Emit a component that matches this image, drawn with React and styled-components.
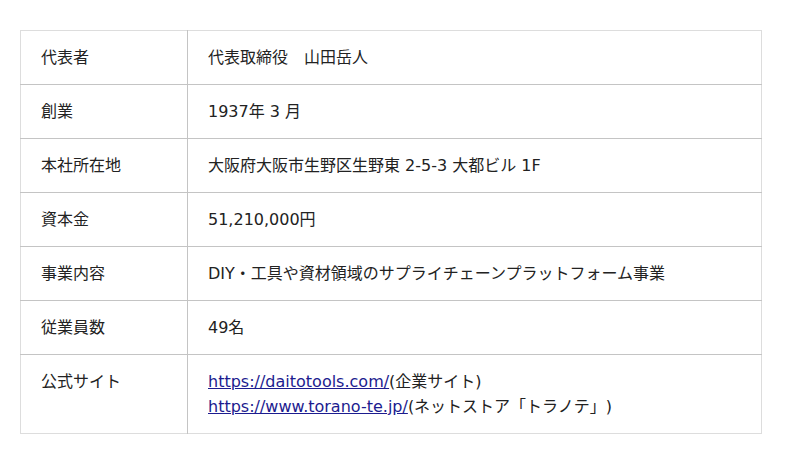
import React from "react";
import styled, { createGlobalStyle } from "styled-components";

const GlobalStyle = createGlobalStyle`
  html, body {
    margin: 0;
    padding: 0;
    background: #fff;
  }
  body {
    font-family: "DejaVu Sans", "Noto Sans CJK JP", sans-serif;
    color: #222;
    text-spacing-trim: space-all;
  }
`;

const Page = styled.div`
  padding: 30px 20px;
`;

const Table = styled.table`
  width: 742px;
  border-collapse: collapse;
  border: 1px solid #ddd;
  font-size: 16px;
  line-height: 25px;
`;

const Row = styled.tr`
  border-bottom: 1px solid #c4c4c4;
  &:last-child {
    border-bottom: 1px solid #ddd;
  }
`;

const Head = styled.th`
  width: 126px;
  padding: 14px 20px;
  text-align: left;
  vertical-align: top;
  font-weight: normal;
  border-right: 1px solid #c4c4c4;
`;

const Cell = styled.td`
  padding: 14px 20px;
  vertical-align: top;
`;

const Link = styled.a`
  color: #1c1c8f;
  text-decoration: underline;
`;

const rows = [
  ["代表者", "代表取締役　山田岳人"],
  ["創業", "1937年 3 月"],
  ["本社所在地", "大阪府大阪市生野区生野東 2-5-3 大都ビル 1F"],
  ["資本金", "51,210,000円"],
  ["事業内容", "DIY・工具や資材領域のサプライチェーンプラットフォーム事業"],
  ["従業員数", "49名"],
];

const App = () => {
  return (
    <Page>
      <GlobalStyle />
      <Table>
        <tbody>
          {rows.map(([k, v]) => (
            <Row key={k}>
              <Head>{k}</Head>
              <Cell>{v}</Cell>
            </Row>
          ))}
          <Row>
            <Head>公式サイト</Head>
            <Cell>
              <Link href="#">https://daitotools.com/</Link>(企業サイト)
              <br />
              <Link href="#">https://www.torano-te.jp/</Link>(ネットストア「トラノテ」)
            </Cell>
          </Row>
        </tbody>
      </Table>
    </Page>
  );
};

export default App;
